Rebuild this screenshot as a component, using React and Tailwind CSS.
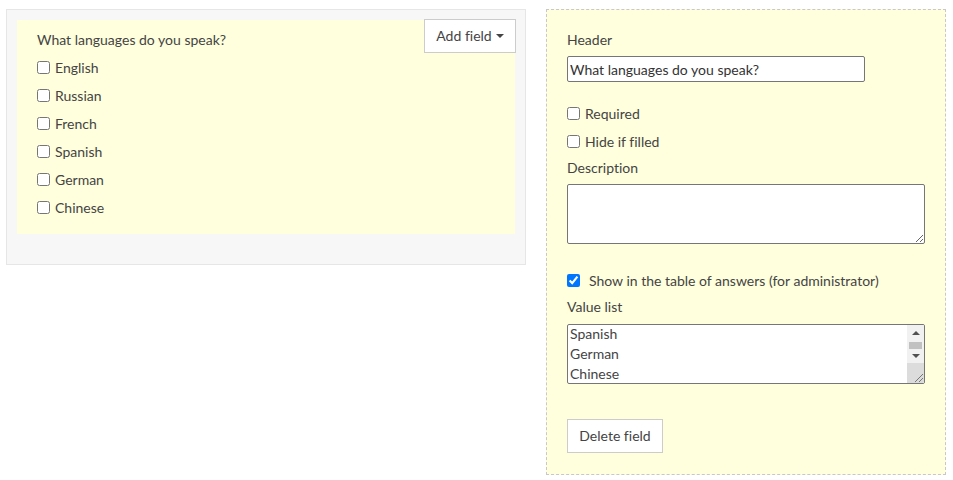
import React from "react";

const font = { fontFamily: "Lato, 'Liberation Sans', sans-serif" };

function Check({ label, checked }) {
  return (
    <label className="flex items-center h-[28px] text-[14px] text-[#444]">
      <input type="checkbox" defaultChecked={checked} className="w-[13px] h-[13px] m-0 mr-[5px]" />
      <span>{label}</span>
    </label>
  );
}

export default function App() {
  return (
    <div className="w-[953px] h-[480px] bg-white [font-variant-ligatures:none]" style={font}>
      <div className="flex items-start pt-[9px] pl-[6px]">
        <div className="w-[520px] h-[256px] bg-[#f7f7f7] border border-[#e6e6e6] pt-[10px] pl-[10px]">
          <div className="w-[498px] h-[214px] bg-[#ffffdd] pl-[20px] pt-[9px] relative">
            <div className="text-[14px] text-[#444] h-[22px] leading-[22px]">What languages do you speak?</div>
            <div className="flex flex-col mt-[2px]">
              <Check label="English" />
              <Check label="Russian" />
              <Check label="French" />
              <Check label="Spanish" />
              <Check label="German" />
              <Check label="Chinese" />
            </div>
            <button className="absolute right-[-1px] top-[-1px] w-[92px] h-[34px] pb-[2px] bg-white border border-[#ccc] text-[14px] text-[#444] flex items-center justify-center gap-[4px]">
              Add field
              <span className="inline-block w-0 h-0 border-l-[4px] border-r-[4px] border-t-[4px] border-l-transparent border-r-transparent border-t-[#444] mt-[2px]"></span>
            </button>
          </div>
        </div>
        <div className="ml-[20px] w-[400px] h-[466px] bg-[#ffffdd] border border-dashed border-[#c8c8c8] pl-[20px] pt-[21px] text-[14px] text-[#444]">
          <div className="h-[18px] leading-[18px]">Header</div>
          <input
            defaultValue="What languages do you speak?"
            className="mt-[7px] w-[298px] h-[26px] bg-white border border-[#767676] rounded-[2px] px-[2px] text-[14px] text-[#333] outline-none"
          />
          <div className="mt-[17px]">
            <Check label="Required" />
            <Check label="Hide if filled" />
          </div>
          <div className="h-[20px] leading-[20px] mt-[3px]">Description</div>
          <textarea className="block mt-[6px] w-[358px] h-[60px] bg-white border border-[#767676] rounded-[2px]" />
          <label className="flex items-center h-[28px] mt-[22px]">
            <input type="checkbox" defaultChecked className="w-[13px] h-[13px] m-0 mr-[9px] accent-[#0075ff]" />
            <span>Show in the table of answers (for administrator)</span>
          </label>
          <div className="h-[20px] leading-[20px] mt-[3px]">Value list</div>
          <div className="mt-[7px] w-[358px] h-[60px] bg-white border border-[#767676] rounded-[2px] flex overflow-hidden">
            <div className="flex-1 px-[2px] -mt-[1px] text-[14px] leading-[20px] text-[#444]">
              <div>Spanish</div>
              <div>German</div>
              <div>Chinese</div>
            </div>
            <div className="w-[17px] bg-[#f1f1f1] flex flex-col items-center">
              <div className="h-[15px] flex items-center justify-center">
                <span className="w-0 h-0 border-l-[4px] border-r-[4px] border-b-[4px] border-l-transparent border-r-transparent border-b-[#505050]"></span>
              </div>
              <div className="w-[13px] h-[7px] bg-[#c1c1c1] mt-[2px]"></div>
              <div className="h-[14px] flex items-center justify-center">
                <span className="w-0 h-0 border-l-[4px] border-r-[4px] border-t-[4px] border-l-transparent border-r-transparent border-t-[#505050]"></span>
              </div>
              <div className="flex-1 w-full bg-[#dcdcdc] flex items-end justify-end">
                <svg width="10" height="10" viewBox="0 0 10 10">
                  <line x1="1" y1="9" x2="9" y2="1" stroke="#777" strokeWidth="1" />
                  <line x1="5" y1="9" x2="9" y2="5" stroke="#777" strokeWidth="1" />
                </svg>
              </div>
            </div>
          </div>
          <button className="mt-[35px] w-[96px] h-[34px] pb-[2px] bg-white border border-[#ccc] text-[14px] text-[#444]">
            Delete field
          </button>
        </div>
      </div>
    </div>
  );
}
